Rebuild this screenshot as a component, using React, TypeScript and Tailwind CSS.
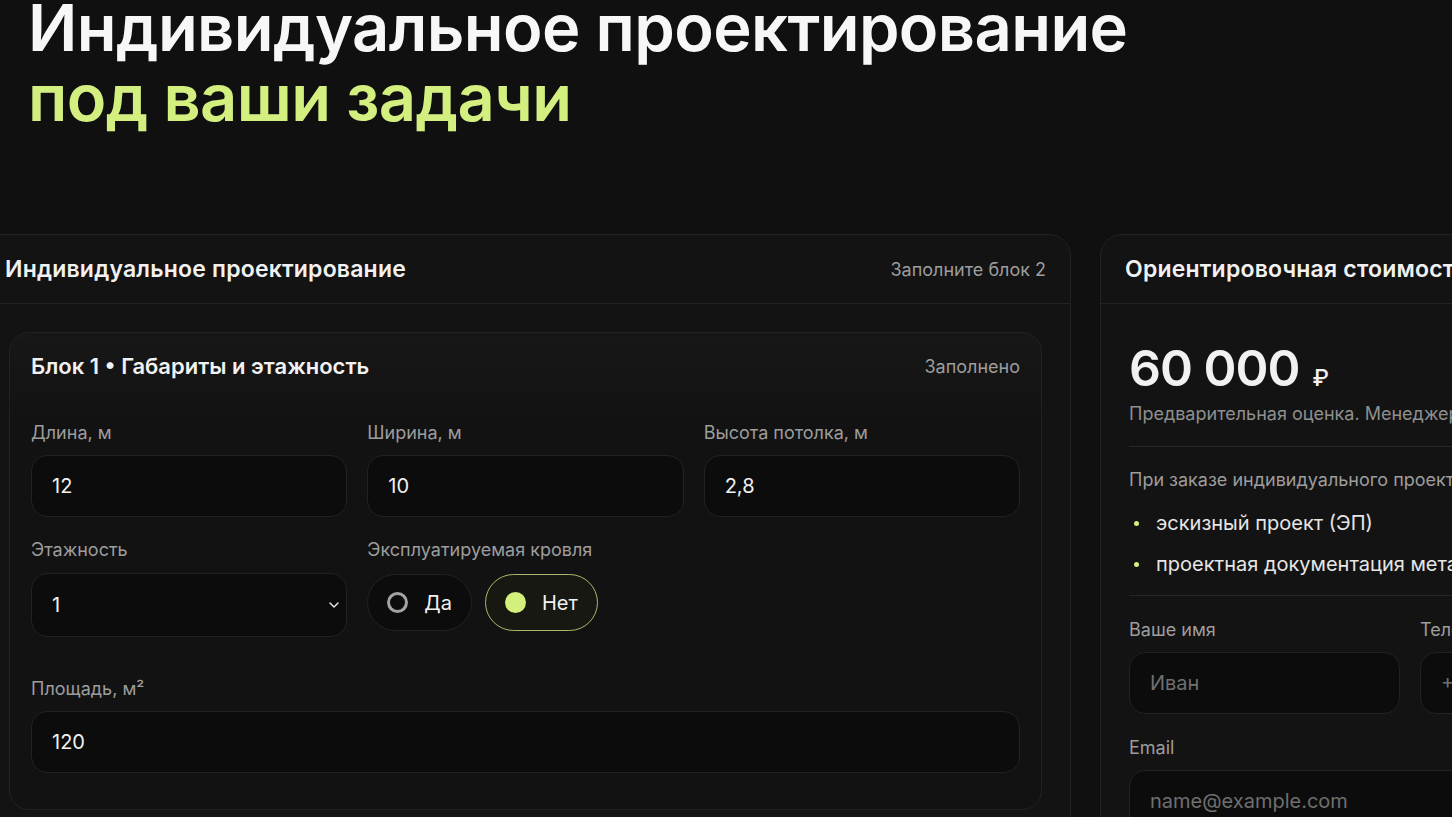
import React from "react";
import { ChevronDown } from "lucide-react";

function Field({ label, value, placeholder }: { label: string; value?: string; placeholder?: string }) {
  return (
    <div className="flex flex-col">
      <span className="text-[18px] leading-5 text-[#9d9d9d] whitespace-nowrap">{label}</span>
      <div className="mt-3 h-[62px] rounded-[16px] border border-[#222222] bg-[#0c0c0c] px-5 flex items-center">
        {value ? (
          <span className="text-[20px] text-[#f1f1f1]">{value}</span>
        ) : (
          <span className="text-[20px] text-[#6f6f6f] whitespace-nowrap">{placeholder}</span>
        )}
      </div>
    </div>
  );
}

function Radio({ label, active }: { label: string; active?: boolean }) {
  return (
    <div
      className={`h-[57px] rounded-full border px-[19px] flex items-center gap-[16px] ${
        active ? "border-[#a9b86e] bg-[#161811]" : "border-[#222222] bg-[#0c0c0c]"
      }`}
    >
      {active ? (
        <span className="h-[21px] w-[21px] rounded-full bg-[#d4f07c]" />
      ) : (
        <span className="h-[21px] w-[21px] rounded-full border-[3px] border-[#a3a3a3]" />
      )}
      <span className="text-[20px] text-[#f1f1f1]">{label}</span>
    </div>
  );
}

export default function App() {
  return (
    <div className="h-[817px] w-full overflow-hidden bg-[#101010] font-['Inter',sans-serif]">
      <h1 className="-mt-[7px] pl-[28px] text-[65px] font-semibold leading-[70px] tracking-[-0.6px] whitespace-nowrap">
        <span className="block text-[#f7f7f7]">Индивидуальное проектирование</span>
        <span className="block text-[#d3ef80]">под ваши задачи</span>
      </h1>

      <div className="mt-[101px] -ml-[20px] flex gap-[29px]">
        {/* Left card */}
        <section className="w-[1091px] shrink-0 rounded-[22px] border border-[#222222] bg-[#131313]">
          <div className="h-[69px] px-6 flex items-center justify-between border-b border-[#232323]">
            <h2 className="text-[23px] font-semibold tracking-[0.2px] text-[#f1f1f1]">Индивидуальное проектирование</h2>
            <span className="text-[18px] text-[#9d9d9d]">Заполните блок 2</span>
          </div>

          <div className="p-7">
            <div className="rounded-[20px] border border-[#222222] bg-gradient-to-b from-[#171717] to-[#121212] to-[20%] px-[21px] pb-[36px]">
              <div className="h-[66px] flex items-center justify-between">
                <h3 className="text-[22px] font-semibold text-[#f1f1f1]">Блок 1 • Габариты и этажность</h3>
                <span className="text-[18px] text-[#9d9d9d]">Заполнено</span>
              </div>

              <div className="pt-[24px] grid grid-cols-3 gap-x-5">
                <Field label="Длина, м" value="12" />
                <Field label="Ширина, м" value="10" />
                <Field label="Высота потолка, м" value="2,8" />
              </div>

              <div className="mt-[23px] grid grid-cols-3 gap-x-5">
                <div className="flex flex-col">
                  <span className="text-[18px] leading-5 text-[#9d9d9d]">Этажность</span>
                  <div className="mt-[13px] h-[64px] rounded-[16px] border border-[#222222] bg-[#0c0c0c] pl-5 pr-[4px] flex items-center justify-between">
                    <span className="text-[20px] text-[#f1f1f1]">1</span>
                    <ChevronDown size={16} strokeWidth={2.25} className="text-[#e5e5e5]" />
                  </div>
                </div>
                <div className="flex flex-col col-span-2">
                  <span className="text-[18px] leading-5 text-[#9d9d9d]">Эксплуатируемая кровля</span>
                  <div className="mt-[14px] flex gap-[13px]">
                    <Radio label="Да" />
                    <Radio label="Нет" active />
                  </div>
                </div>
              </div>

              <div className="mt-[42px]">
                <Field label="Площадь, м²" value="120" />
              </div>
            </div>
          </div>
        </section>

        {/* Right card */}
        <section className="w-[620px] shrink-0 rounded-[22px] border border-[#222222] bg-[#131313]">
          <div className="h-[69px] px-6 flex items-center border-b border-[#232323]">
            <h2 className="text-[23px] font-semibold tracking-[0.2px] text-[#f1f1f1] whitespace-nowrap">Ориентировочная стоимость</h2>
          </div>

          <div className="px-7 pt-[34px]">
            <div className="flex items-baseline gap-[13px] h-[60px]">
              <span className="text-[50px] font-semibold leading-[60px] text-[#f1f1f1] tracking-[-1px]">60 000</span>
              <span className="text-[23px] font-medium text-[#f1f1f1]">₽</span>
            </div>
            <p className="mt-[5px] text-[18px] leading-[22px] text-[#8f8f8f] whitespace-nowrap">
              Предварительная оценка. Менеджер уточнит стоимость после звонка.
            </p>

            <div className="mt-[21px] border-t border-[#262626] pt-[22px]">
              <p className="text-[18px] leading-[22px] text-[#9d9d9d] whitespace-nowrap">
                При заказе индивидуального проекта вы получаете:
              </p>
              <ul className="mt-[20px] flex flex-col gap-[17px]">
                <li className="flex items-center gap-[17px] text-[20px] leading-6 text-[#e6e6e6] whitespace-nowrap">
                  <span className="ml-[5px] h-[5px] w-[5px] rounded-full bg-[#d3ef80]" />
                  эскизный проект (ЭП)
                </li>
                <li className="flex items-center gap-[17px] text-[20px] leading-6 text-[#e6e6e6] whitespace-nowrap">
                  <span className="ml-[5px] h-[5px] w-[5px] rounded-full bg-[#d3ef80]" />
                  проектная документация металлоконструкций
                </li>
              </ul>
            </div>

            <div className="mt-[19px] border-t border-[#262626] pt-[24px]">
              <div className="grid grid-cols-2 gap-x-5">
                <Field label="Ваше имя" placeholder="Иван" />
                <Field label="Телефон" placeholder="+7 (999) 000-00-00" />
              </div>
              <div className="mt-[24px]">
                <Field label="Email" placeholder="name@example.com" />
              </div>
            </div>
          </div>
        </section>
      </div>
    </div>
  );
}
